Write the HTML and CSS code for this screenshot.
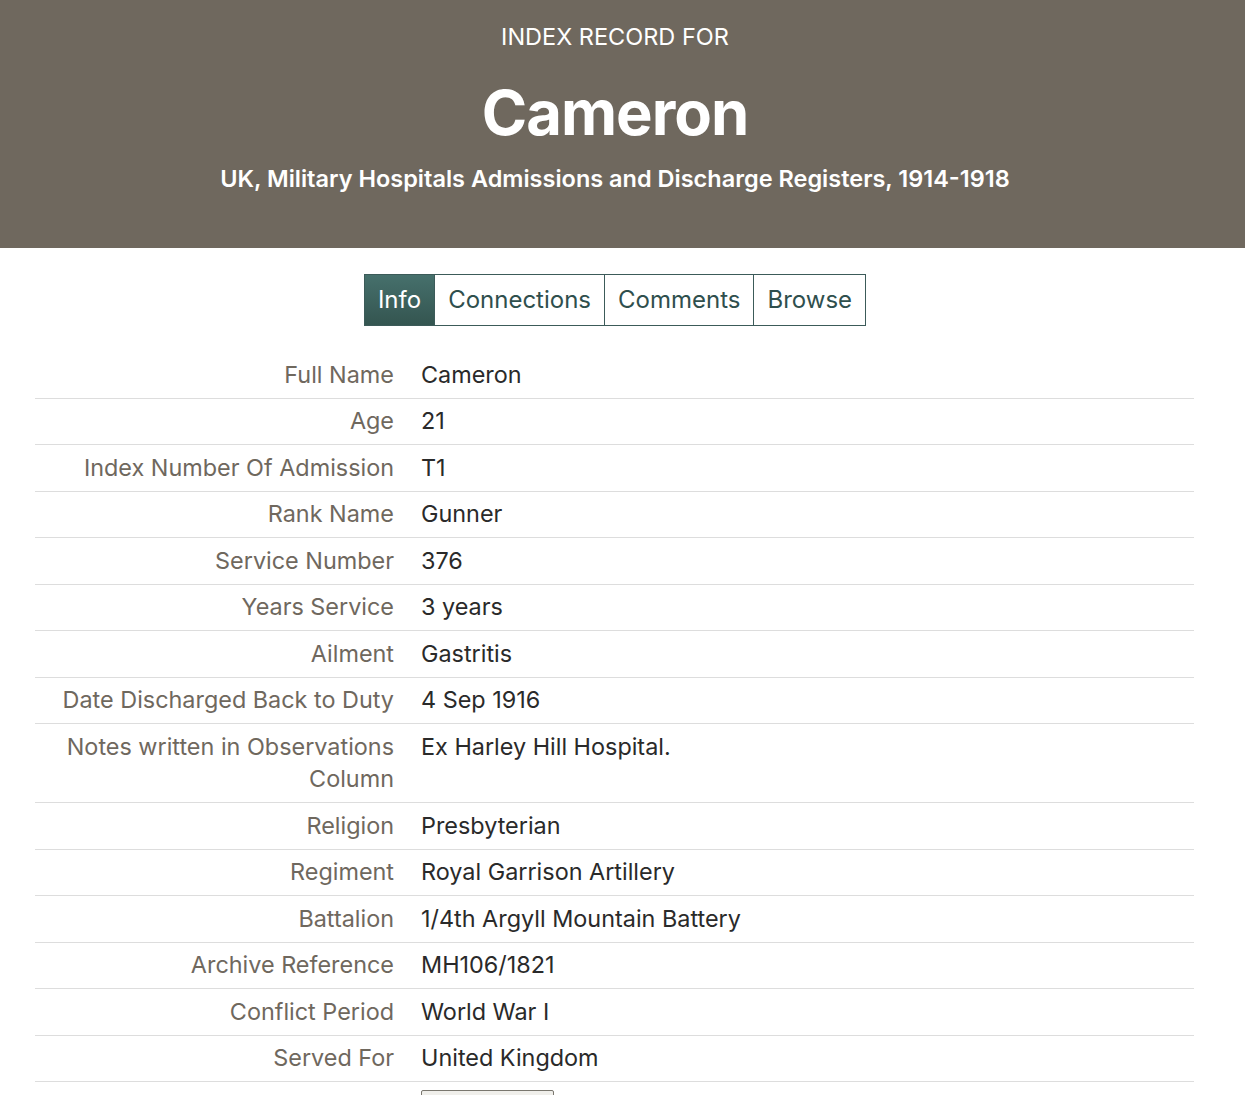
FILE: index.html
```html
<!DOCTYPE html>
<html lang="en">
<head>
    <meta charset="UTF-8">
    <meta name="viewport" content="width=device-width, initial-scale=1.0">
    <title>Cameron - UK, Military Hospitals Admissions and Discharge Registers, 1914-1918</title>
    <link rel="stylesheet" href="styles.css">
</head>
<body>
    <header class="record-header">
        <div class="kicker">INDEX RECORD FOR</div>
        <h1>Cameron</h1>
        <div class="collection">UK, Military Hospitals Admissions and Discharge Registers, 1914-1918</div>
    </header>

    <nav class="tabs">
        <a class="tab active" href="#">Info</a>
        <a class="tab" href="#">Connections</a>
        <a class="tab" href="#">Comments</a>
        <a class="tab" href="#">Browse</a>
    </nav>

    <div class="record">
        <table class="facts">
            <tbody>
                <tr><th>Full Name</th><td>Cameron</td></tr>
                <tr><th>Age</th><td>21</td></tr>
                <tr><th>Index Number Of Admission</th><td>T1</td></tr>
                <tr><th>Rank Name</th><td>Gunner</td></tr>
                <tr><th>Service Number</th><td>376</td></tr>
                <tr><th>Years Service</th><td>3 years</td></tr>
                <tr><th>Ailment</th><td>Gastritis</td></tr>
                <tr><th>Date Discharged Back to Duty</th><td>4 Sep 1916</td></tr>
                <tr><th>Notes written in Observations Column</th><td>Ex Harley Hill Hospital.</td></tr>
                <tr><th>Religion</th><td>Presbyterian</td></tr>
                <tr><th>Regiment</th><td>Royal Garrison Artillery</td></tr>
                <tr><th>Battalion</th><td>1/4th Argyll Mountain Battery</td></tr>
                <tr><th>Archive Reference</th><td>MH106/1821</td></tr>
                <tr><th>Conflict Period</th><td>World War I</td></tr>
                <tr><th>Served For</th><td>United Kingdom</td></tr>
                <tr class="actions"><th></th><td><button class="btn">&nbsp;</button></td></tr>
            </tbody>
        </table>
    </div>
</body>
</html>
```

FILE: styles.css
```css
body {
    margin: 0;
    font-family: Inter, "Liberation Sans", Arial, sans-serif;
    background-color: #fff;
    color: #2a2a2a;
}
.record-header {
    background-color: #6f685e;
    color: #fff;
    text-align: center;
    height: 248px;
    padding: 23px 15px 0 0;
    box-sizing: border-box;
}
.kicker {
    font-size: 23.5px;
    line-height: 28px;
}
.record-header h1 {
    margin: 26px 0 0;
    font-size: 61.5px;
    line-height: 72px;
    font-weight: bold;
    letter-spacing: -1px;
}
.collection {
    margin-top: 16px;
    font-size: 23.5px;
    line-height: 28px;
    font-weight: 600;
}
.tabs {
    display: flex;
    justify-content: center;
    margin-top: 26px;
    padding-right: 15px;
}
.tab {
    display: block;
    padding: 0 13px;
    height: 52px;
    line-height: 50px;
    box-sizing: border-box;
    border: 1px solid #3c5b59;
    border-left: none;
    font-size: 24px;
    color: #2f4f4d;
    text-decoration: none;
}
.tab:first-child {
    border-left: 1px solid #3c5b59;
}
.tab.active {
    background: linear-gradient(#46706c, #345550);
    color: #fff;
}
.record {
    padding: 26px 51px 0 35px;
}
.facts {
    width: 100%;
    border-collapse: collapse;
    font-size: 23.4px;
    line-height: 32.5px;
}
.facts th, .facts td {
    padding: 6.5px 0 6.5px;
    border-bottom: 1px solid #ddd;
    vertical-align: top;
}
.facts th {
    width: 359px;
    padding-right: 27px;
    text-align: right;
    font-weight: normal;
    color: #6f685e;
}
.facts td {
    color: #2a2a2a;
}
.facts .actions th, .facts .actions td {
    border-bottom: none;
}
.btn {
    margin-top: 1px;
    width: 133px;
    height: 40px;
    background-color: #f0efeb;
    border: 1px solid #7a776f;
    border-radius: 2px;
}
```
